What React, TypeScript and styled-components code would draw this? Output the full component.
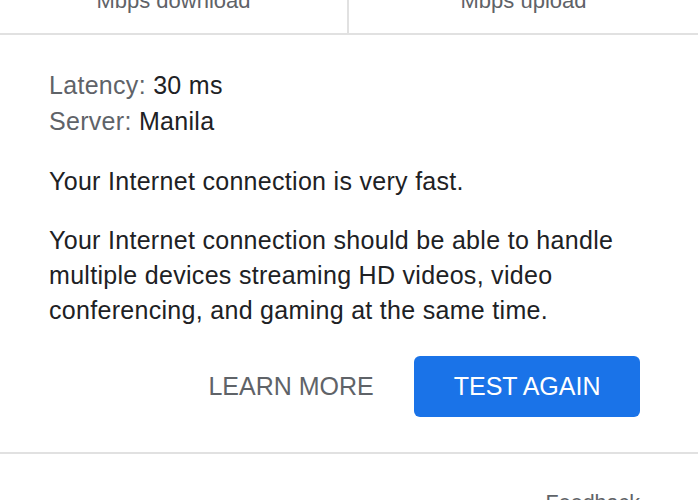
import React from "react";
import styled, { createGlobalStyle } from "styled-components";

const Global = createGlobalStyle`
  html, body {
    margin: 0;
    padding: 0;
    background: #ffffff;
    overflow: hidden;
  }
  body {
    font-family: "Liberation Sans", Arial, Helvetica, sans-serif;
  }
`;

const Page = styled.div`
  width: 698px;
  margin-top: -20px;
  background: #ffffff;
`;

const StatsRow = styled.div`
  display: grid;
  grid-template-columns: 1fr 1fr;
  border-bottom: 2px solid #e1e1e1;
`;

const StatCell = styled.div<{ $divider?: boolean }>`
  padding: 10px 0 21px;
  text-align: center;
  font-size: 22px;
  line-height: 22px;
  color: #5f6368;
  border-right: ${(p) => (p.$divider ? "2px solid #e1e1e1" : "none")};
`;

const Body = styled.div`
  padding: 32px 58px 35px 49px;
  border-bottom: 2px solid #e1e1e1;
`;

const InfoList = styled.div`
  display: flex;
  flex-direction: column;
`;

const InfoLine = styled.div`
  font-size: 25px;
  line-height: 36px;
  letter-spacing: 0.3px;
  color: #202124;
`;

const Label = styled.span`
  color: #5f6368;
`;

const Paragraph = styled.p<{ $top: number }>`
  margin: ${(p) => p.$top}px 0 0;
  font-size: 25px;
  line-height: 35px;
  letter-spacing: 0.3px;
  color: #202124;
`;

const Actions = styled.div`
  display: flex;
  justify-content: flex-end;
  align-items: center;
  margin-top: 28px;
`;

const Button = styled.button<{ $primary?: boolean }>`
  height: 61px;
  padding: 0 39.5px;
  border: none;
  border-radius: 6px;
  font-family: "Liberation Sans", Arial, Helvetica, sans-serif;
  font-size: 25px;
  line-height: 25px;
  cursor: pointer;
  background: ${(p) => (p.$primary ? "#1a73e8" : "transparent")};
  color: ${(p) => (p.$primary ? "#ffffff" : "#5f6368")};
  margin-left: ${(p) => (p.$primary ? "1px" : "0")};
`;

const Footer = styled.div`
  display: flex;
  justify-content: flex-end;
  padding: 38px 58px 0 0;
`;

const FeedbackLink = styled.a`
  font-size: 21.5px;
  line-height: 22px;
  color: #5f6368;
  text-decoration: none;
`;

export default function App() {
  return (
    <>
      <Global />
      <Page>
        <StatsRow>
          <StatCell $divider>Mbps download</StatCell>
          <StatCell>Mbps upload</StatCell>
        </StatsRow>
        <Body>
          <InfoList>
            <InfoLine>
              <Label>Latency:</Label> 30 ms
            </InfoLine>
            <InfoLine>
              <Label>Server:</Label> Manila
            </InfoLine>
          </InfoList>
          <Paragraph $top={25}>Your Internet connection is very fast.</Paragraph>
          <Paragraph $top={24}>
            Your Internet connection should be able to handle
            <br />
            multiple devices streaming HD videos, video
            <br />
            conferencing, and gaming at the same time.
          </Paragraph>
          <Actions>
            <Button>LEARN MORE</Button>
            <Button $primary>TEST AGAIN</Button>
          </Actions>
        </Body>
        <Footer>
          <FeedbackLink href="#">Feedback</FeedbackLink>
        </Footer>
      </Page>
    </>
  );
}
